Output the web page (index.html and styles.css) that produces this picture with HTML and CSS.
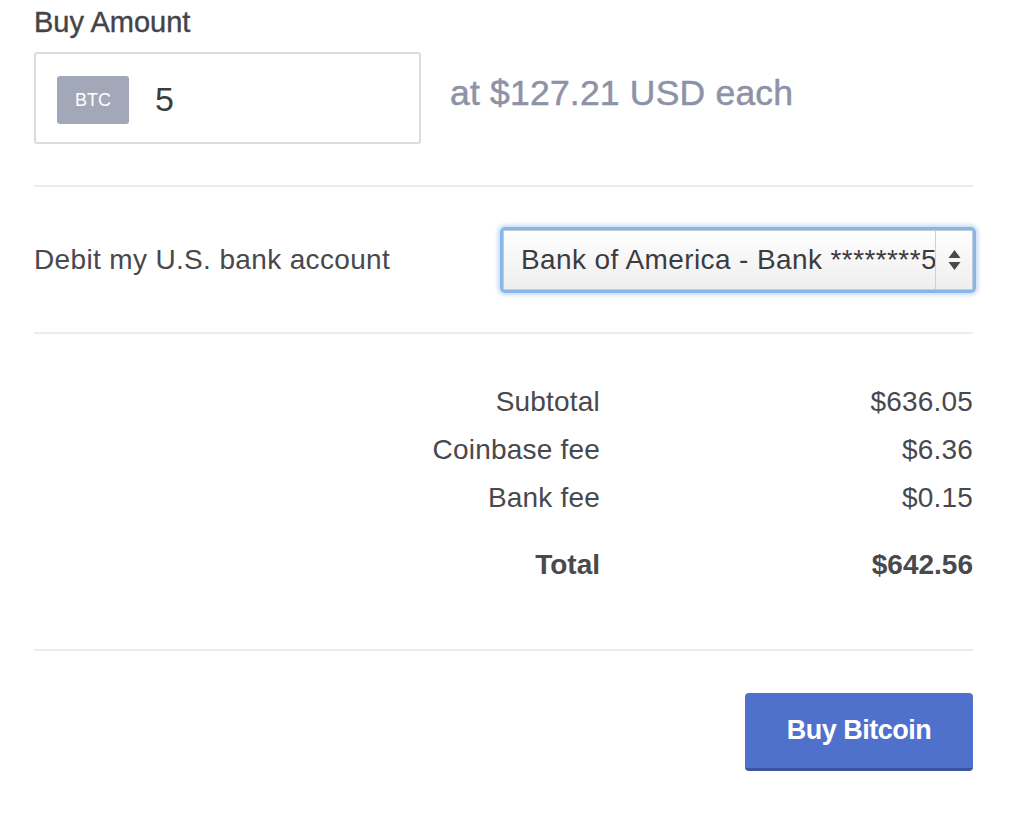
FILE: index.html
```html
<!DOCTYPE html>
<html lang="en">
<head>
  <meta charset="UTF-8" />
  <meta name="viewport" content="width=device-width, initial-scale=1" />
  <title>Buy Bitcoin</title>
  <link rel="stylesheet" href="styles.css">
</head>
<body>
  <div class="buy-form">
    <div class="section amount">
      <label class="amount-label" for="amount">Buy Amount</label>
      <div class="amount-row">
        <div class="amount-input">
          <span class="currency">BTC</span>
          <span class="amount-value" id="amount">5</span>
        </div>
        <div class="price">at $127.21 USD each</div>
      </div>
    </div>

    <div class="section payment">
      <span class="payment-label">Debit my U.S. bank account</span>
      <div class="select">
        <span class="select-text">Bank of America - Bank ********5</span>
        <span class="select-arrows">
          <svg width="13" height="22" viewBox="0 0 13 22">
            <path d="M6.5 1 L12.5 9 L0.5 9 Z" fill="#4a4a4a"/>
            <path d="M6.5 21 L12.5 13 L0.5 13 Z" fill="#4a4a4a"/>
          </svg>
        </span>
      </div>
    </div>

    <div class="section summary">
      <span class="label">Subtotal</span><span class="value">$636.05</span>
      <span class="label">Coinbase fee</span><span class="value">$6.36</span>
      <span class="label">Bank fee</span><span class="value">$0.15</span>
      <span class="label total">Total</span><span class="value total">$642.56</span>
    </div>

    <div class="actions">
      <button class="buy-btn">Buy Bitcoin</button>
    </div>
  </div>
</body>
</html>
```

FILE: styles.css
```css
*, *::before, *::after {
  box-sizing: border-box;
}
body {
  margin: 0;
  background: #fff;
  font-family: "Liberation Sans", Arial, Helvetica, sans-serif;
  color: #48484d;
}
.buy-form {
  width: 939px;
  margin-left: 34px;
}
.section {
  border-bottom: 2px solid #ececec;
}
.amount {
  padding-top: 5px;
  padding-bottom: 41px;
}
.amount-label {
  display: block;
  font-size: 29px;
  line-height: 34px;
  color: #444448;
  -webkit-text-stroke: 0.4px #444448;
  margin-bottom: 13px;
}
.amount-row {
  display: flex;
  align-items: center;
}
.amount-input {
  width: 387px;
  height: 92px;
  border: 2px solid #dcdcdc;
  border-radius: 3px;
  display: flex;
  align-items: center;
  padding-left: 21px;
}
.currency {
  width: 72px;
  height: 48px;
  margin-top: 4px;
  background: #a3a8b9;
  border-radius: 3px;
  color: #fff;
  font-size: 18px;
  display: flex;
  align-items: center;
  justify-content: center;
}
.amount-value {
  font-size: 34px;
  margin-left: 26px;
  margin-top: 2px;
  color: #3c3c40;
}
.price {
  margin-left: 29px;
  margin-top: -9px;
  font-size: 35.5px;
  letter-spacing: 0.2px;
  color: #8e92a6;
  -webkit-text-stroke: 0.5px #8e92a6;
}
.payment {
  display: flex;
  align-items: center;
  justify-content: space-between;
  height: 147px;
}
.payment-label {
  font-size: 28px;
  letter-spacing: 0.35px;
}
.select {
  width: 476px;
  height: 66px;
  margin-right: -3px;
  border: 3px solid #86b7e6;
  border-radius: 5px;
  box-shadow: 0 0 4px 2px rgba(120, 170, 230, 0.45), inset 0 0 0 1px #c6cbd2;
  background: linear-gradient(#ffffff, #eeeeee);
  display: flex;
  align-items: center;
}
.select-text {
  flex: 1;
  padding-left: 18px;
  font-size: 28px;
  letter-spacing: 0.4px;
  color: #3c3c40;
  white-space: nowrap;
  overflow: hidden;
  text-overflow: clip;
}
.select-arrows {
  width: 38px;
  height: 100%;
  border-left: 1px solid #cfcfcf;
  display: flex;
  align-items: center;
  justify-content: center;
}
.summary {
  display: grid;
  grid-template-columns: 566px 1fr;
  row-gap: 17px;
  padding-top: 52px;
  padding-bottom: 69px;
  font-size: 28px;
  line-height: 31px;
  letter-spacing: 0.2px;
}
.summary .label,
.summary .value {
  text-align: right;
}
.summary .total {
  font-weight: bold;
  margin-top: 19px;
  letter-spacing: 0;
}
.actions {
  display: flex;
  justify-content: flex-end;
  padding-top: 42px;
}
.buy-btn {
  width: 228px;
  height: 78px;
  background: #5071cb;
  border: none;
  border-bottom: 3px solid #3b559f;
  border-radius: 4px;
  color: #fff;
  font-family: "Liberation Sans", Arial, Helvetica, sans-serif;
  font-size: 27px;
  font-weight: bold;
  letter-spacing: -0.5px;
  cursor: pointer;
}
```
